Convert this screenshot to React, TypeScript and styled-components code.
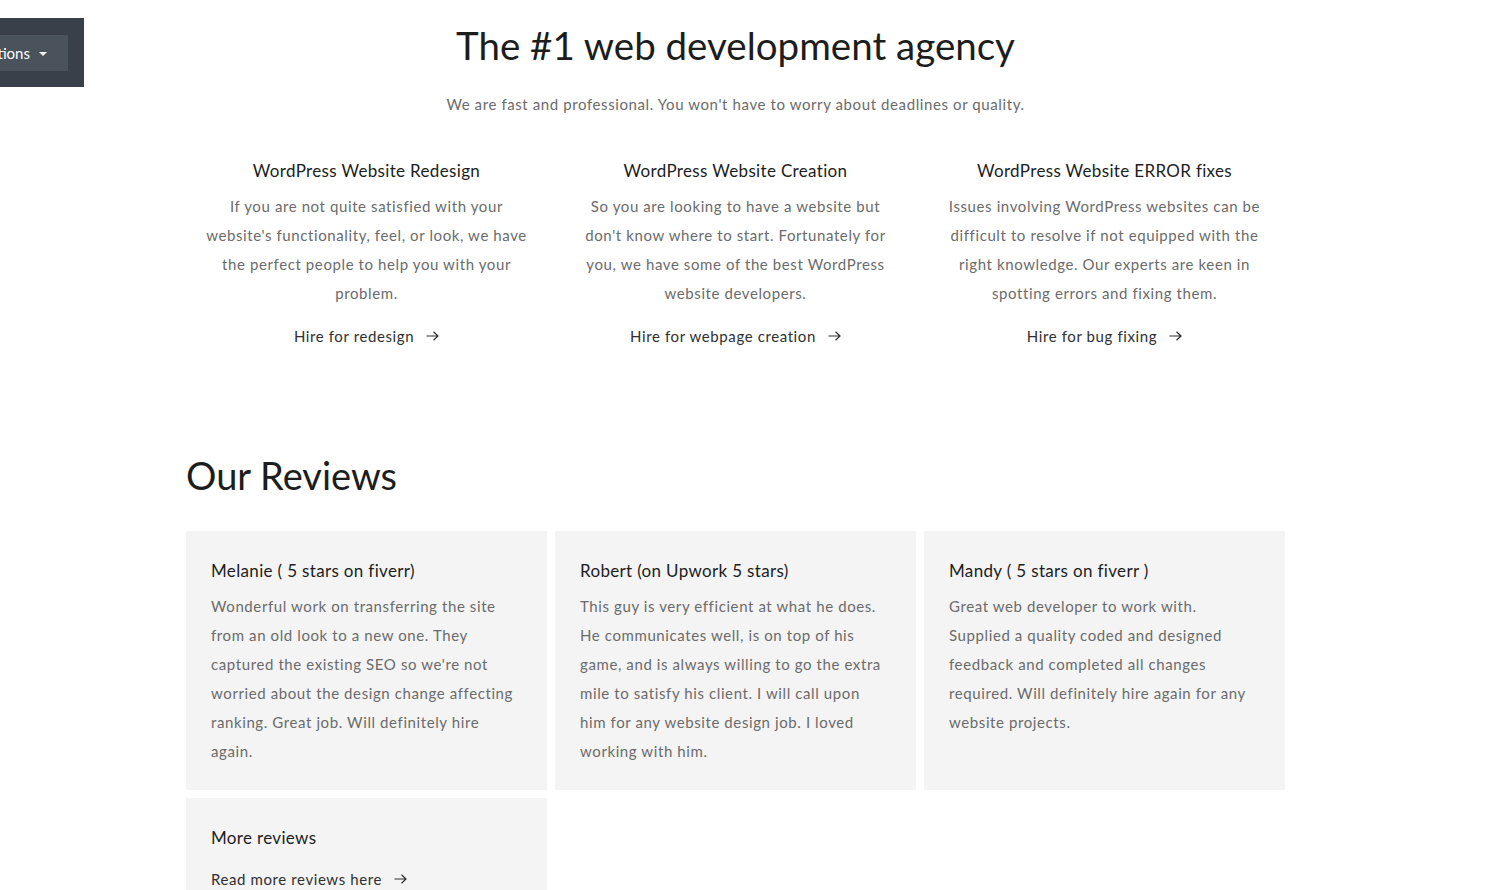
import styled, { createGlobalStyle } from 'styled-components';

const GlobalStyle = createGlobalStyle`
  body {
    margin: 0;
    background: #ffffff;
    font-family: Lato, "Liberation Sans", sans-serif;
    color: #3d3d3d;
  }
`;

const StyledPage = styled.div`
  position: relative;
  width: 1471px;
  padding-top: 24px;
`;

const StyledOptionsBar = styled.div`
  position: absolute;
  top: 18px;
  left: 0;
  width: 84px;
  height: 69px;
  background-color: #39404a;
  display: flex;
  align-items: center;
`;

const StyledOptionsButton = styled.div`
  width: 68px;
  height: 36px;
  background-color: #4a525b;
  display: flex;
  align-items: center;
  justify-content: flex-end;
  gap: 9px;
  padding-right: 21px;
  box-sizing: border-box;
  color: #ffffff;
  font-size: 15px;
  overflow: hidden;
  white-space: nowrap;
`;

const StyledCaret = styled.span`
  width: 0;
  height: 0;
  border-left: 4px solid transparent;
  border-right: 4px solid transparent;
  border-top: 4px solid #ffffff;
  margin-top: 2px;
`;

const StyledContainer = styled.div`
  width: 1099px;
  margin: 0 auto;
`;

const StyledTitle = styled.h1`
  margin: 0;
  text-align: center;
  font-size: 38.5px;
  font-weight: 400;
  color: #1c1d1d;
  line-height: 42px;
`;

const StyledSubtitle = styled.p`
  margin: 29px 0 0;
  text-align: center;
  font-size: 15px;
  letter-spacing: 0.04em;
  color: #6b6b6b;
`;

const StyledFeatureGrid = styled.div`
  display: grid;
  grid-template-columns: repeat(3, 1fr);
  gap: 8px;
  margin-top: 46px;
`;

const StyledFeature = styled.div`
  display: flex;
  flex-direction: column;
  align-items: center;
  text-align: center;
  padding: 0 16px;
`;

const StyledFeatureHeading = styled.h3`
  margin: 0;
  font-size: 17px;
  font-weight: 400;
  color: #1c1d1d;
  letter-spacing: 0.02em;
  line-height: 24px;
`;

const StyledText = styled.p`
  margin: 9px 0 0;
  font-size: 15px;
  line-height: 29px;
  letter-spacing: 0.04em;
  color: #6b6b6b;
`;

const StyledFeatureText = styled(StyledText)`
  max-width: 340px;
`;

const StyledLink = styled.a<{ $top: number }>`
  display: inline-flex;
  align-items: center;
  gap: 12px;
  margin-top: ${(props) => props.$top}px;
  font-size: 15px;
  letter-spacing: 0.04em;
  color: #2f2f2f;
  text-decoration: none;
`;

const StyledReviewsTitle = styled.h2`
  margin: 106px 0 0;
  font-size: 38px;
  font-weight: 400;
  color: #1c1d1d;
  line-height: 48px;
`;

const StyledReviewGrid = styled.div`
  display: grid;
  grid-template-columns: repeat(3, 1fr);
  gap: 8px;
  margin-top: 32px;
`;

const StyledCard = styled.div`
  background-color: #f4f4f4;
  padding: 27px 30px 24px 25px;
  min-height: 258px;
  box-sizing: border-box;
`;

const StyledCardHeading = styled.h3`
  margin: 0;
  font-size: 17px;
  font-weight: 400;
  color: #1c1d1d;
  letter-spacing: 0.02em;
  line-height: 25px;
`;

const Arrow = () => (
  <svg width="13" height="10" viewBox="0 0 13 10" fill="none" stroke="#2f2f2f" strokeWidth="1.2">
    <path d="M0.5 5H12M7.5 0.8L12 5L7.5 9.2" />
  </svg>
);

interface Feature {
  heading: string;
  text: string;
  link: string;
}

const features: Feature[] = [
  {
    heading: 'WordPress Website Redesign',
    text: "If you are not quite satisfied with your website's functionality, feel, or look, we have the perfect people to help you with your problem.",
    link: 'Hire for redesign',
  },
  {
    heading: 'WordPress Website Creation',
    text: "So you are looking to have a website but don't know where to start. Fortunately for you, we have some of the best WordPress website developers.",
    link: 'Hire for webpage creation',
  },
  {
    heading: 'WordPress Website ERROR fixes',
    text: 'Issues involving WordPress websites can be difficult to resolve if not equipped with the right knowledge. Our experts are keen in spotting errors and fixing them.',
    link: 'Hire for bug fixing',
  },
];

interface Review {
  name: string;
  text: string;
}

const reviews: Review[] = [
  {
    name: 'Melanie ( 5 stars on fiverr)',
    text: "Wonderful work on transferring the site from an old look to a new one. They captured the existing SEO so we're not worried about the design change affecting ranking. Great job. Will definitely hire again.",
  },
  {
    name: 'Robert (on Upwork 5 stars)',
    text: 'This guy is very efficient at what he does. He communicates well, is on top of his game, and is always willing to go the extra mile to satisfy his client. I will call upon him for any website design job. I loved working with him.',
  },
  {
    name: 'Mandy ( 5 stars on fiverr )',
    text: 'Great web developer to work with. Supplied a quality coded and designed feedback and completed all changes required. Will definitely hire again for any website projects.',
  },
];

export default function App() {
  return (
    <>
      <GlobalStyle />
      <StyledPage>
        <StyledOptionsBar>
          <StyledOptionsButton>
            tions
            <StyledCaret />
          </StyledOptionsButton>
        </StyledOptionsBar>
        <StyledContainer>
          <StyledTitle>The #1 web development agency</StyledTitle>
          <StyledSubtitle>
            We are fast and professional. You won't have to worry about deadlines or quality.
          </StyledSubtitle>
          <StyledFeatureGrid>
            {features.map((feature) => (
              <StyledFeature key={feature.heading}>
                <StyledFeatureHeading>{feature.heading}</StyledFeatureHeading>
                <StyledFeatureText>{feature.text}</StyledFeatureText>
                <StyledLink href="#" $top={19}>
                  {feature.link}
                  <Arrow />
                </StyledLink>
              </StyledFeature>
            ))}
          </StyledFeatureGrid>
          <StyledReviewsTitle>Our Reviews</StyledReviewsTitle>
          <StyledReviewGrid>
            {reviews.map((review) => (
              <StyledCard key={review.name}>
                <StyledCardHeading>{review.name}</StyledCardHeading>
                <StyledText>{review.text}</StyledText>
              </StyledCard>
            ))}
            <StyledCard>
              <StyledCardHeading>More reviews</StyledCardHeading>
              <StyledLink href="#" $top={20}>
                Read more reviews here
                <Arrow />
              </StyledLink>
            </StyledCard>
          </StyledReviewGrid>
        </StyledContainer>
      </StyledPage>
    </>
  );
}
